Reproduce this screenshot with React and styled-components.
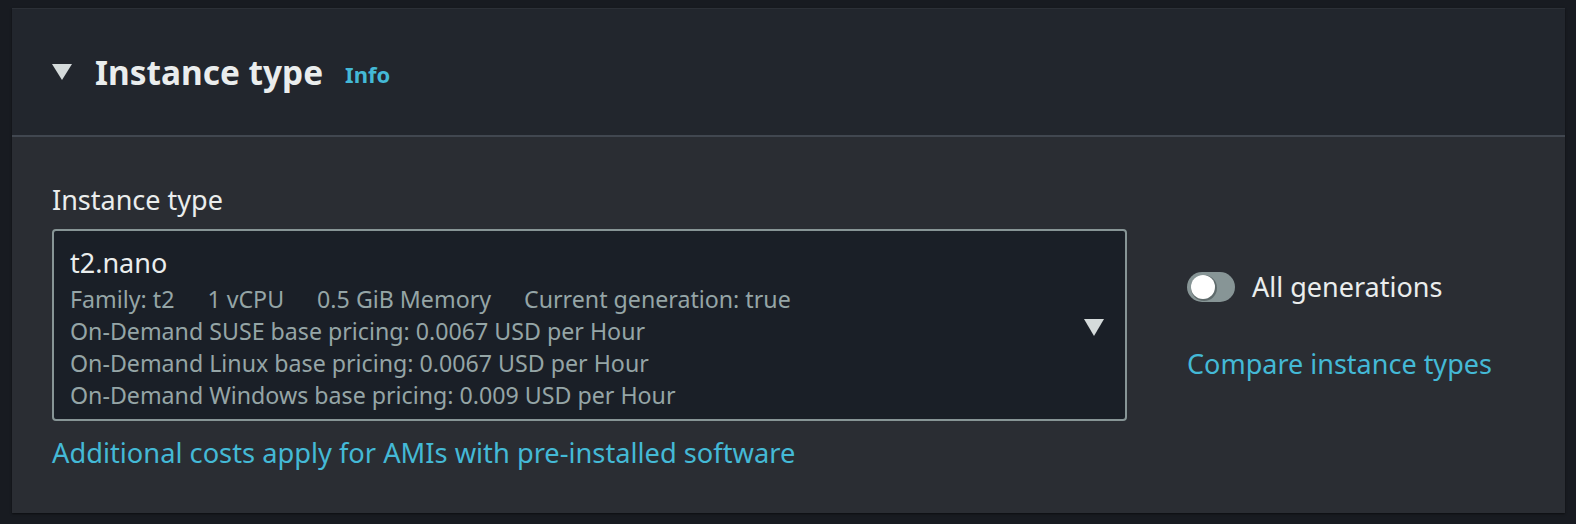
import React from "react";
import styled, { createGlobalStyle } from "styled-components";

const Global = createGlobalStyle`
  html, body { margin: 0; padding: 0; background: #181b21; }
  body { font-family: "Noto Sans", "Open Sans", sans-serif; }
  * { box-sizing: border-box; }
`;

const Page = styled.div`
  width: 1576px;
  height: 524px;
  padding: 8px 11px 11px 12px;
  background: #181b21;
`;

const Panel = styled.section`
  background: #2a2d33;
  box-shadow: 0 1px 2px rgba(0, 0, 0, 0.5);
  height: 100%;
  display: flex;
  flex-direction: column;
`;

const Header = styled.header`
  background: #22262d;
  border-top: 1px solid #2c3037;
  border-bottom: 2px solid #414750;
  padding: 41px 40px 41px 40px;
  display: flex;
  align-items: center;
  height: 131px;
`;

const Caret = styled.svg`
  width: ${(p) => p.$w}px;
  height: ${(p) => p.$h}px;
  flex: none;
  display: block;
`;

const Title = styled.h2`
  margin: 0 0 0 23px;
  font-size: 33.4px;
  line-height: 44px;
  font-weight: 700;
  color: #eaeded;
`;

const InfoLink = styled.a`
  margin-left: 22px;
  margin-top: 4px;
  font-size: 22px;
  font-weight: 700;
  color: #44b9d6;
  text-decoration: none;
`;

const Body = styled.div`
  padding: 43px 40px 40px 40px;
  display: grid;
  grid-template-columns: 1075px 1fr;
  column-gap: 60px;
  align-items: start;
`;

const Field = styled.div`
  display: flex;
  flex-direction: column;
`;

const Label = styled.label`
  font-size: 27px;
  line-height: 40px;
  color: #eaeded;
  margin-bottom: 9px;
`;

const SelectBox = styled.div`
  border: 2px solid #879596;
  border-radius: 4px;
  background: #1a1f27;
  padding: 12px 21px 8px 16px;
  display: flex;
  align-items: center;
  justify-content: space-between;
`;

const SelectContent = styled.div`
  display: flex;
  flex-direction: column;
`;

const Value = styled.div`
  font-size: 27px;
  line-height: 40px;
  color: #eaeded;
`;

const Detail = styled.div`
  font-size: 23.2px;
  line-height: 32px;
  color: #95a5a6;
  display: flex;
  gap: 33px;
`;

const BottomLink = styled.a`
  margin-top: 12px;
  font-size: 27.25px;
  line-height: 40px;
  color: #44b9d6;
  text-decoration: none;
`;

const Side = styled.div`
  padding-top: 87px;
  display: flex;
  flex-direction: column;
  gap: 37px;
`;

const ToggleRow = styled.div`
  display: flex;
  align-items: center;
  gap: 17px;
`;

const Track = styled.span`
  width: 48px;
  height: 30px;
  border-radius: 15px;
  background: #879596;
  position: relative;
  flex: none;
`;

const Knob = styled.span`
  position: absolute;
  left: 4px;
  top: 3px;
  width: 24px;
  height: 24px;
  border-radius: 50%;
  background: #ffffff;
  box-shadow: 1px 1px 0 1px #5f6b6c;
`;

const ToggleLabel = styled.span`
  font-size: 27px;
  line-height: 40px;
  color: #eaeded;
`;

const SideLink = styled.a`
  font-size: 27px;
  line-height: 40px;
  color: #44b9d6;
  text-decoration: none;
`;

const Triangle = ({ w, h }) => (
  <Caret $w={w} $h={h} viewBox={`0 0 ${w} ${h}`}>
    <polygon points={`0,0 ${w},0 ${w / 2},${h}`} fill="#d5dbdb" />
  </Caret>
);

export default function App() {
  return (
    <>
      <Global />
      <Page>
        <Panel>
          <Header>
            <Triangle w={20} h={16} />
            <Title>Instance type</Title>
            <InfoLink href="#">Info</InfoLink>
          </Header>
          <Body>
            <Field>
              <Label>Instance type</Label>
              <SelectBox>
                <SelectContent>
                  <Value>t2.nano</Value>
                  <Detail>
                    <span>Family: t2</span>
                    <span>1 vCPU</span>
                    <span>0.5 GiB Memory</span>
                    <span>Current generation: true</span>
                  </Detail>
                  <Detail>On-Demand SUSE base pricing: 0.0067 USD per Hour</Detail>
                  <Detail>On-Demand Linux base pricing: 0.0067 USD per Hour</Detail>
                  <Detail>On-Demand Windows base pricing: 0.009 USD per Hour</Detail>
                </SelectContent>
                <Triangle w={20} h={17} />
              </SelectBox>
              <BottomLink href="#">Additional costs apply for AMIs with pre-installed software</BottomLink>
            </Field>
            <Side>
              <ToggleRow>
                <Track>
                  <Knob />
                </Track>
                <ToggleLabel>All generations</ToggleLabel>
              </ToggleRow>
              <SideLink href="#">Compare instance types</SideLink>
            </Side>
          </Body>
        </Panel>
      </Page>
    </>
  );
}
